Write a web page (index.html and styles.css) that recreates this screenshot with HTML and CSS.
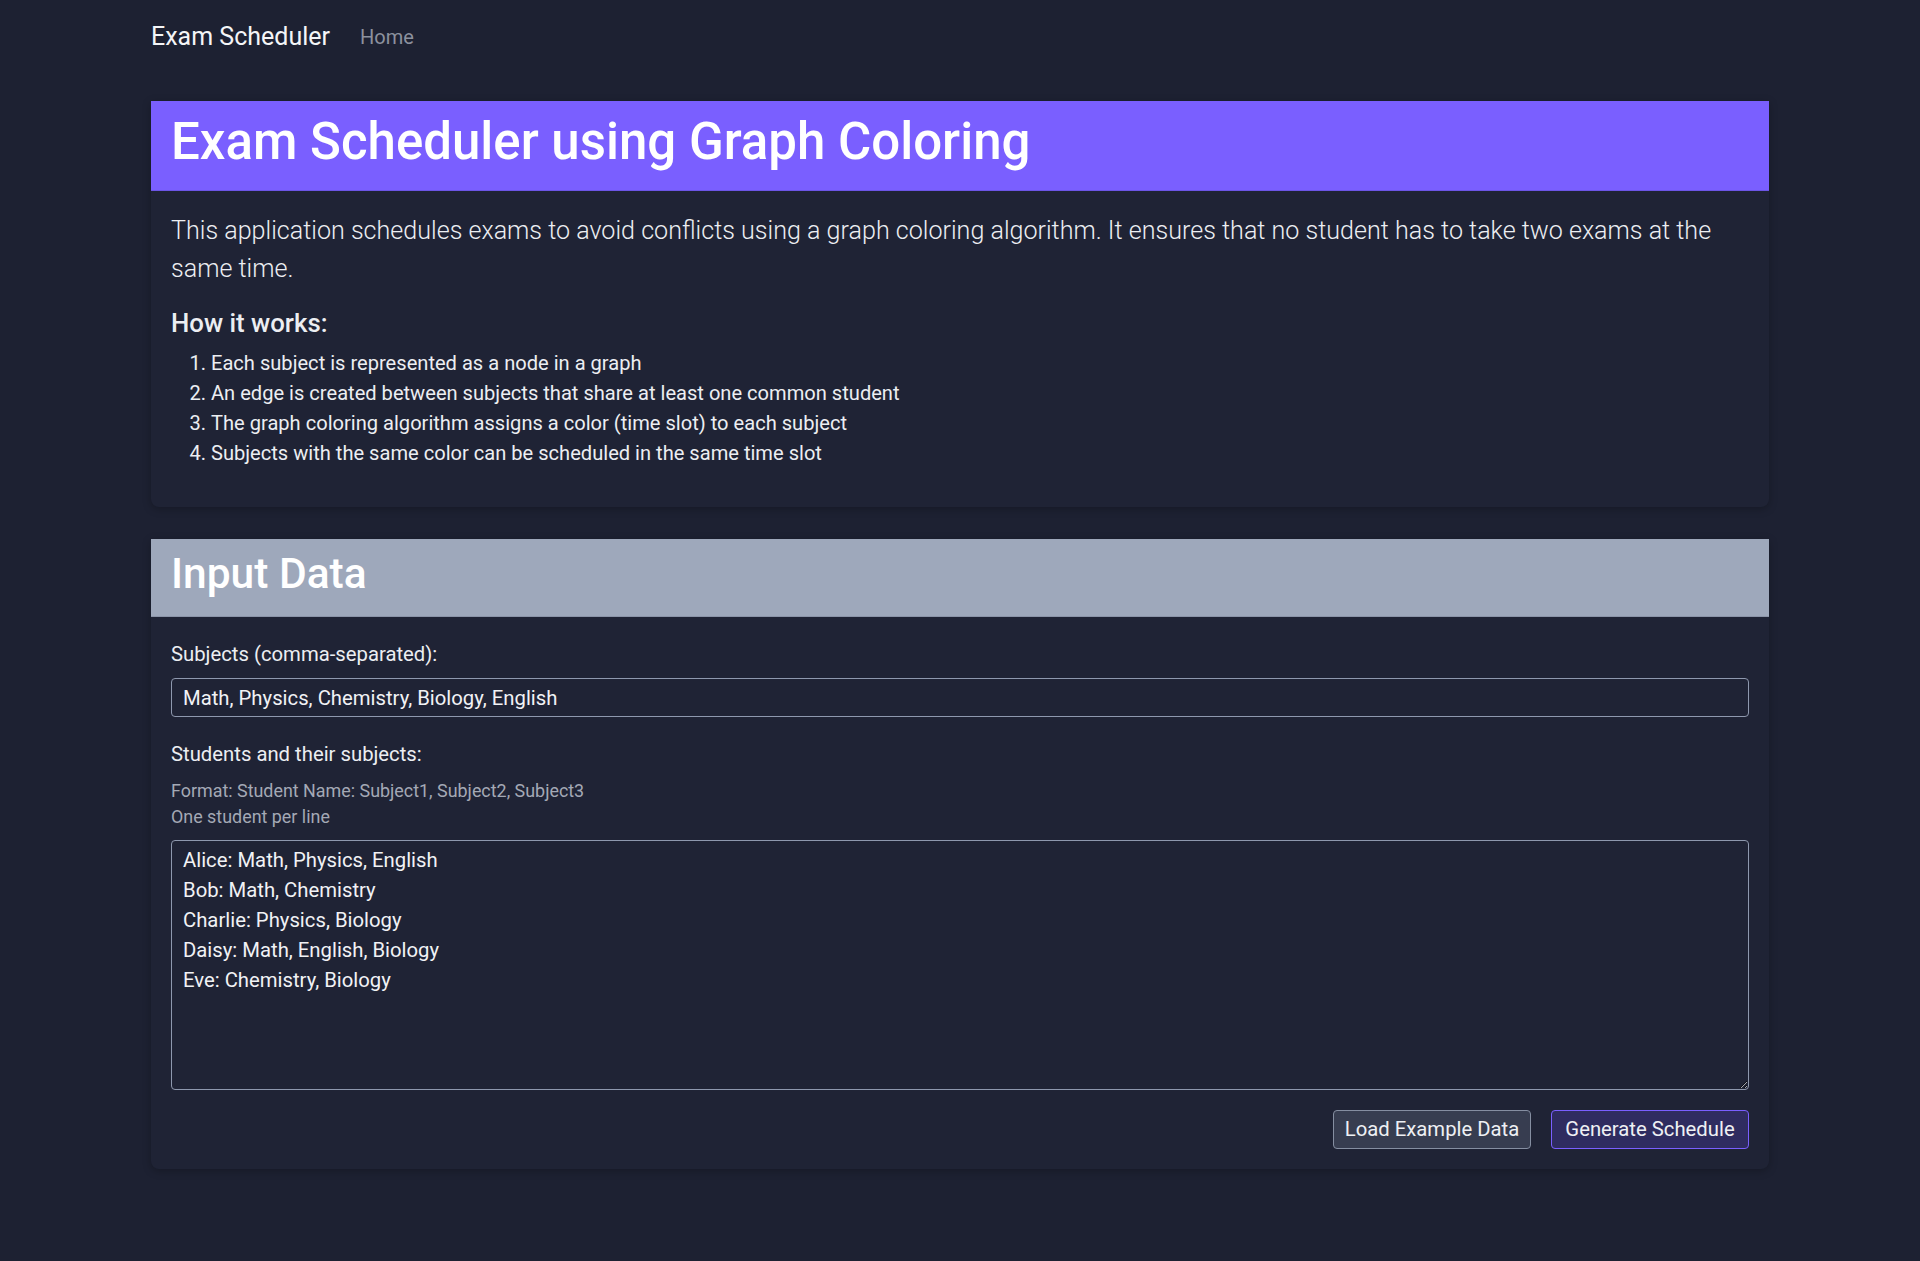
FILE: index.html
```html
<!DOCTYPE html>
<html lang="en">
<head>
<meta charset="utf-8">
<title>Exam Scheduler</title>
<link rel="stylesheet" href="styles.css">
</head>
<body>
<nav class="navbar">
  <div class="container nav-inner">
    <a class="brand" href="#">Exam Scheduler</a>
    <a class="nav-link" href="#">Home</a>
  </div>
</nav>
<main class="container">
  <section class="card">
    <div class="card-header header-primary">
      <h1 class="title">Exam Scheduler using Graph Coloring</h1>
    </div>
    <div class="card-body">
      <p class="lead">This application schedules exams to avoid conflicts using a graph coloring algorithm. It ensures that no student has to take two exams at the same time.</p>
      <h5 class="subhead">How it works:</h5>
      <ol class="steps">
        <li>Each subject is represented as a node in a graph</li>
        <li>An edge is created between subjects that share at least one common student</li>
        <li>The graph coloring algorithm assigns a color (time slot) to each subject</li>
        <li>Subjects with the same color can be scheduled in the same time slot</li>
      </ol>
    </div>
  </section>
  <section class="card">
    <div class="card-header header-secondary">
      <h2 class="section-title">Input Data</h2>
    </div>
    <div class="card-body">
      <div class="form-group">
        <label class="label" for="subjects">Subjects (comma-separated):</label>
        <input class="form-control" id="subjects" type="text" value="Math, Physics, Chemistry, Biology, English">
      </div>
      <div class="form-group">
        <label class="label" for="students">Students and their subjects:</label>
        <p class="help">Format: Student Name: Subject1, Subject2, Subject3<br>One student per line</p>
        <textarea class="form-control textarea" id="students">Alice: Math, Physics, English
Bob: Math, Chemistry
Charlie: Physics, Biology
Daisy: Math, English, Biology
Eve: Chemistry, Biology</textarea>
      </div>
      <div class="actions">
        <button class="btn btn-secondary" type="button">Load Example Data</button>
        <button class="btn btn-primary" type="button">Generate Schedule</button>
      </div>
    </div>
  </section>
</main>
</body>
</html>
```
FILE: styles.css
```css
* { box-sizing: border-box; }
html, body { margin: 0; padding: 0; }
body {
  background: #1d2132;
  color: #eceef2;
  font-family: Roboto, "Liberation Sans", sans-serif;
  font-size: 20px;
  line-height: 1.5;
  min-height: 1261px;
}
.container {
  max-width: 1650px;
  padding: 0 16px;
  margin: 0 auto;
}
.navbar { height: 72px; }
.nav-inner {
  height: 72px;
  display: flex;
  align-items: center;
  gap: 30px;
  padding-top: 2px;
}
.brand {
  color: #f4f5f7;
  text-decoration: none;
  font-size: 25px;
  font-weight: 400;
}
.nav-link {
  color: #8c919e;
  text-decoration: none;
  font-size: 20px;
}
main.container { padding-top: 29px; }
.card {
  background: #1f2335;
  border-radius: 0 0 8px 8px;
  box-shadow: 0 2px 8px rgba(0, 0, 0, 0.25);
  margin-bottom: 32px;
}
.card-header {
  padding: 11px 20px 18px;
}
.header-primary {
  background: #7a5fff;
  border-bottom: 1px solid #6c55e6;
}
.header-secondary {
  background: #9ea8bb;
  border-bottom: 1px solid #8b94a8;
}
.title {
  margin: 0;
  font-size: 51px;
  line-height: 60px;
  font-weight: 500;
  color: #fff;
}
.section-title {
  margin: 0;
  font-size: 42.5px;
  line-height: 48px;
  font-weight: 500;
  color: #fff;
}
.card-body { padding: 20px; }
.lead {
  margin: 0 0 20px;
  font-size: 25.1px;
  font-weight: 300;
  line-height: 37.5px;
  padding-top: 1px;
}
.subhead {
  margin: 0 0 10px;
  font-size: 25.8px;
  line-height: 30px;
  font-weight: 500;
  padding-top: 1px;
}
.steps {
  margin: 0 0 19px;
  padding-left: 40px;
  font-size: 20.1px;
  line-height: 30px;
}
.form-group { margin-bottom: 20px; }
.label {
  display: block;
  font-size: 20.3px;
  line-height: 30px;
  margin-bottom: 9px;
  padding-top: 2px;
}
.help {
  margin: 0 0 10px;
  font-size: 17.9px;
  line-height: 26px;
  color: #a4a9b5;
}
.form-control {
  display: block;
  width: 100%;
  background: #1f2335;
  color: #f1f2f5;
  border: 1px solid #8e98ae;
  border-radius: 4px;
  font-family: inherit;
  font-size: 20.3px;
  line-height: 29px;
  padding: 4px 11px;
  height: 39px;
}
.textarea {
  height: 250px;
  line-height: 30px;
  padding: 4px 11px;
  resize: vertical;
}
.actions {
  display: flex;
  justify-content: flex-end;
  gap: 20px;
}
.btn {
  font-family: inherit;
  font-size: 20.3px;
  line-height: 29px;
  height: 39px;
  width: 198px;
  padding: 4px 8px;
  border-radius: 4px;
  color: #eef0f4;
  cursor: pointer;
}
.btn-secondary {
  background: #373d50;
  border: 1px solid #858ea1;
}
.btn-primary {
  background: #2f2c60;
  border: 1px solid #7a5fff;
}
```
